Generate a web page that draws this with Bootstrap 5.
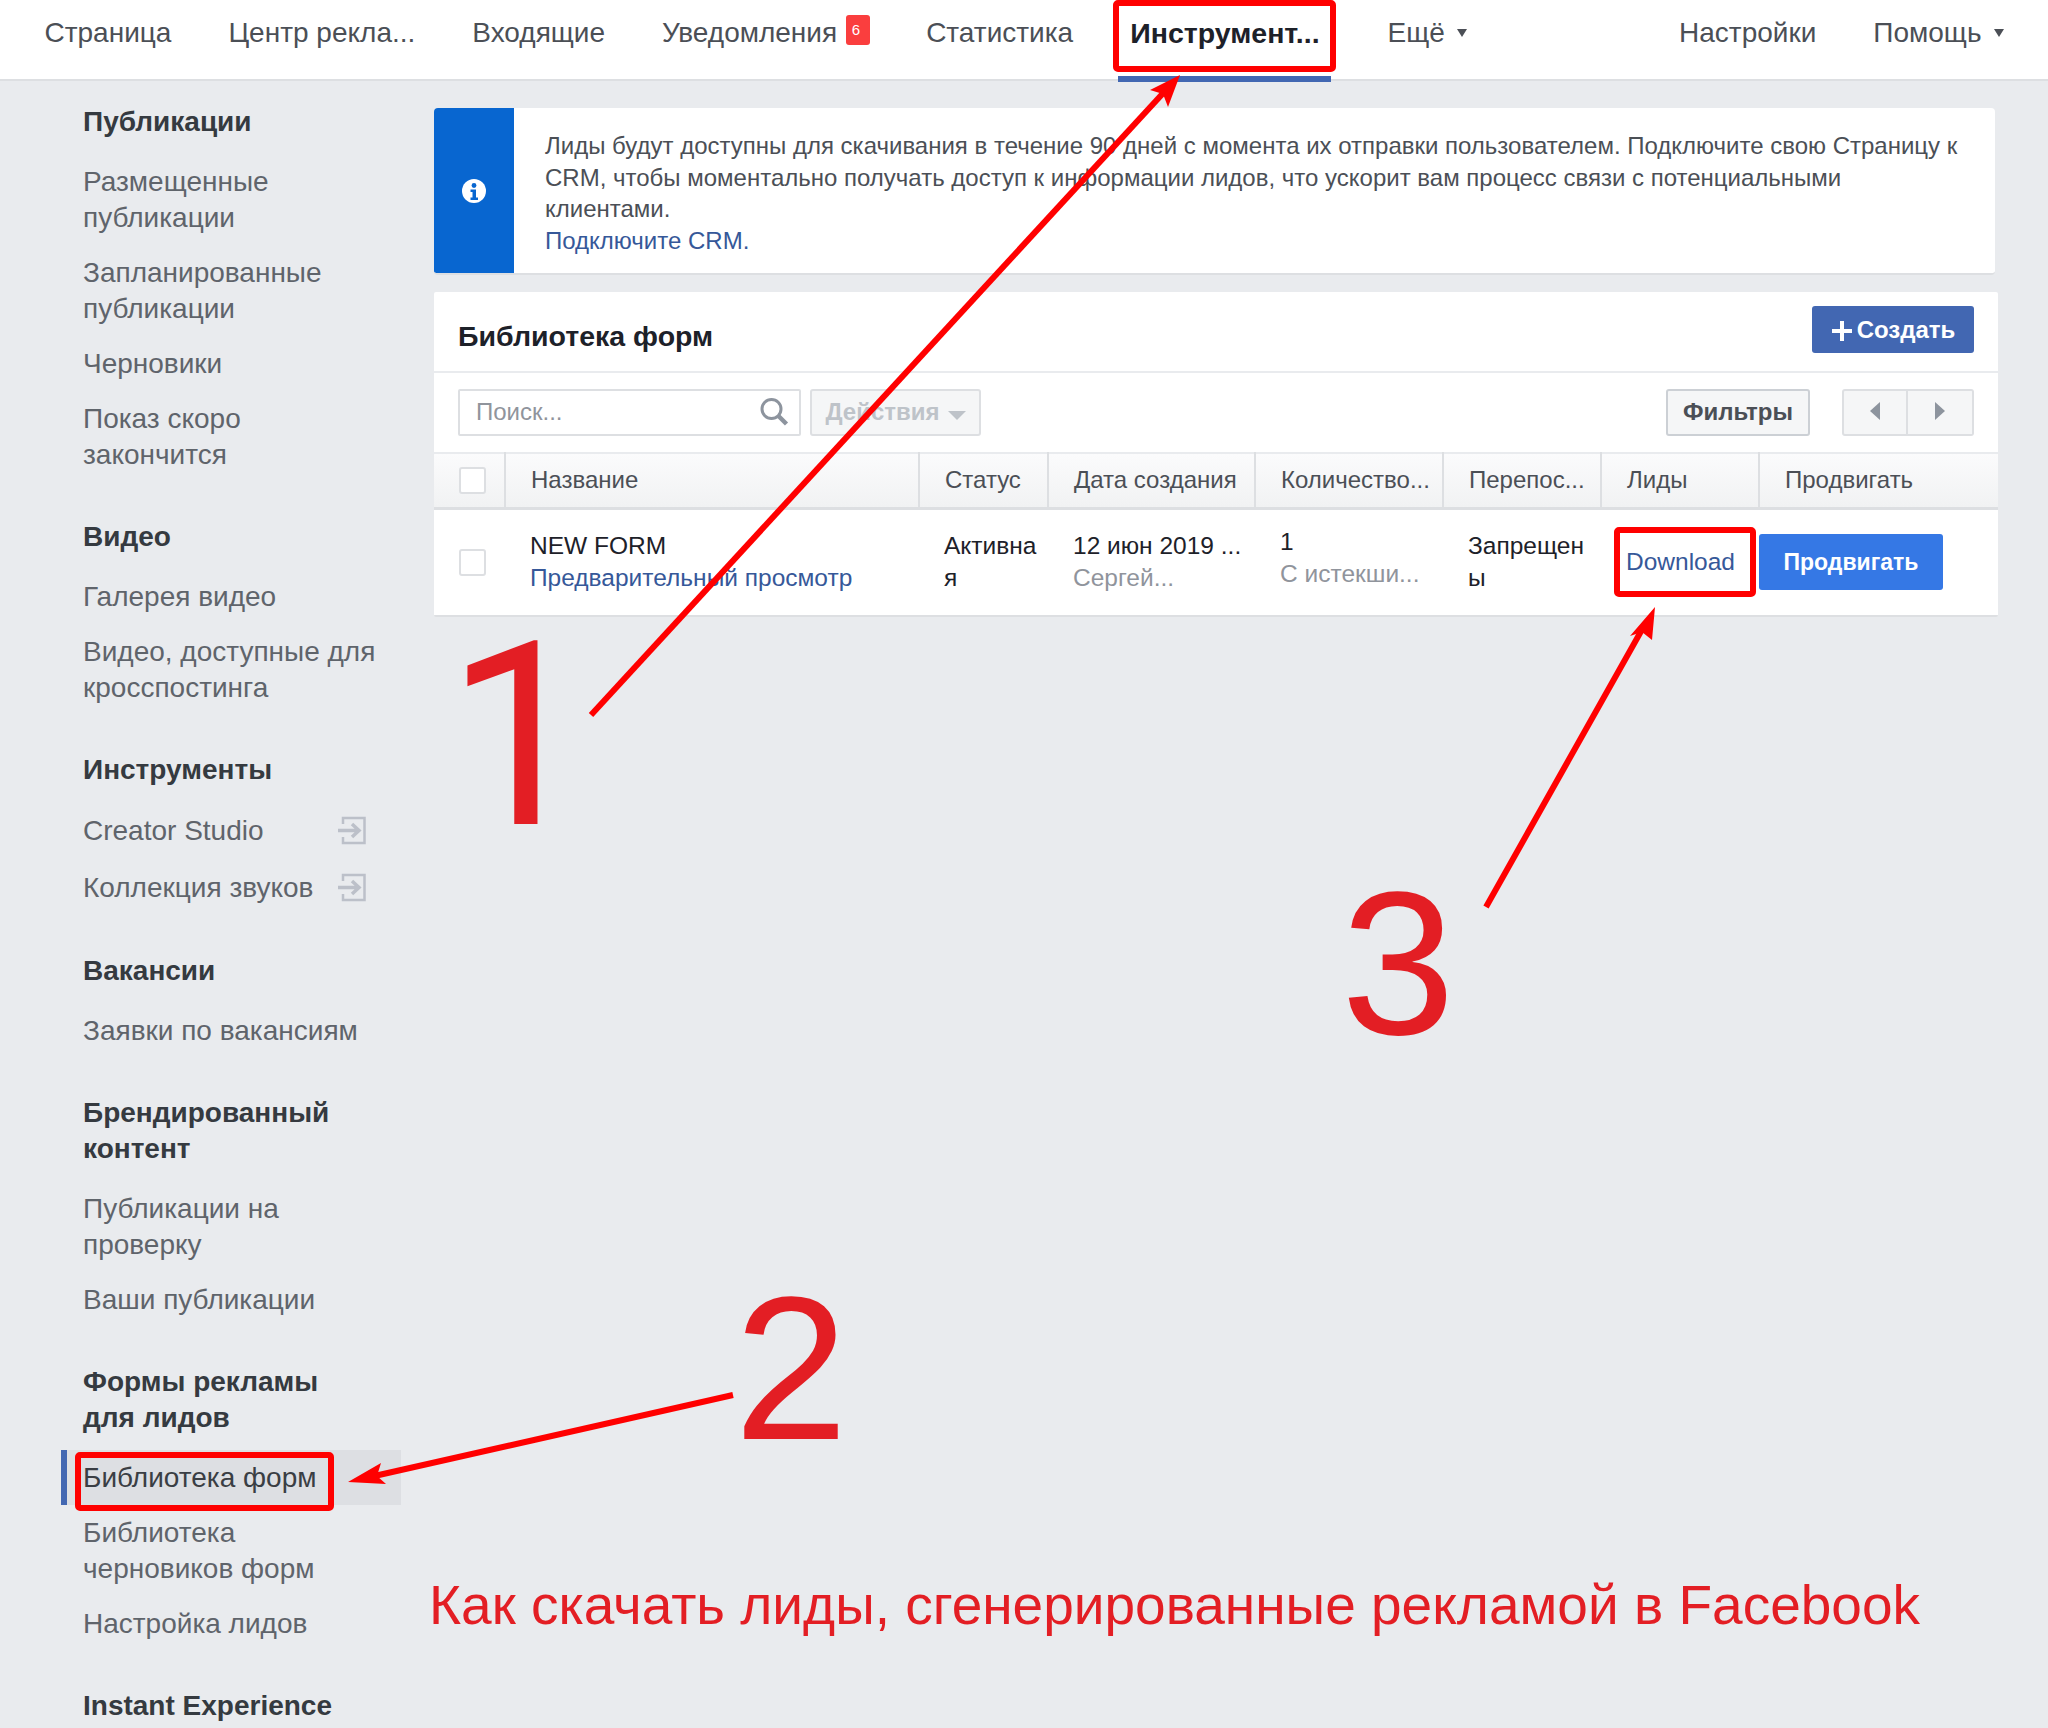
<!DOCTYPE html>
<html lang="ru">
<head>
  <meta charset="UTF-8" />
  <title>Библиотека форм</title>
  <link href="https://cdn.jsdelivr.net/npm/bootstrap@5.3.0/dist/css/bootstrap.min.css" rel="stylesheet" />
  <style>
    body {
      background: #e9ebee;
      color: #4b4f56;
      font-family: "Liberation Sans", Arial, sans-serif;
      font-size: 25px;
      width: 2048px;
      height: 1728px;
      overflow: hidden;
      position: relative;
    }
    /* top bar */
    .top-bar {
      height: 81px;
      background: #fff;
      border-bottom: 2px solid #dddfe2;
      padding: 0 16px;
      font-size: 28px;
    }
    .top-bar .nav-link {
      color: #4b4f56;
      padding: 16px 28.5px 0;
      height: 79px;
      line-height: 34px;
      position: relative;
    }
    .top-bar .nav-link.has-count { padding-right: 60.500px; }
    .top-bar .nav-link.is-current {
      color: #1d2129;
      font-weight: 700;
      font-size: 28.5px;
      margin-right: 11px;
    }
    .top-bar .nav-link.is-current::after {
      content: "";
      position: absolute;
      left: 16px;
      right: 17px;
      bottom: -3px;
      height: 6px;
      background: #4267b2;
    }
    .notif-count {
      background: #fa3e3e;
      color: #fff;
      font-size: 15px;
      font-weight: 400;
      padding: 4px 6px;
      border-radius: 3px;
      height: 30px;
      width: 24px;
      line-height: 22px;
      position: absolute;
      top: 15px;
      right: 28px;
    }
    .caret-dn {
      display: inline-block;
      border: 5px solid transparent;
      border-top: 8px solid #4b4f56;
      border-bottom: 0;
      margin-left: 12px;
      vertical-align: 5px;
    }
    /* sidebar */
    .side-col {
      width: 434px;
      flex: none;
      padding-top: 23px;
    }
    .side-group { margin-bottom: 37px; }
    .side-title {
      font-size: 28px;
      font-weight: 700;
      line-height: 36px;
      color: #353a40;
      padding: 0 70px 0 83px;
      margin-bottom: 14px;
    }
    .side-link {
      line-height: 36px;
      padding: 9.5px 20px 9.5px 83px;
      width: 401px;
      color: #5f646b;
      font-size: 28px;
    }
    .side-link.has-icon { padding: 10.5px 35px 10.5px 83px; }
    .side-link.is-current {
      background: #dddfe3;
      color: #3a3e44;
      margin-left: 61px;
      padding-left: 16px;
      width: 340px;
      border-left: 6px solid #4267b2;
    }
    .side-link svg { width: 28px; height: 29px; }
    /* content */
    .main-col {
      width: 1564px;
      padding-top: 27px;
    }
    .info-box {
      height: 167px;
      width: 1561px;
      background: #fff;
      border: 0;
      border-bottom: 2px solid #dddfe2;
      border-radius: 4px;
      overflow: hidden;
      margin-bottom: 17px;
      font-size: 24px;
      line-height: 31.5px;
    }
    .info-icon {
      width: 80px;
      flex: none;
      background: #0866d0;
    }
    .info-text { padding: 22px 30px 0 31px; }
    .fb-link { color: #365899; text-decoration: none; }
    .forms-card {
      height: 325px;
      border: 0;
      border-radius: 2px;
      border-bottom: 2px solid #dddfe2;
      background: #fff;
    }
    .forms-head {
      height: 81px;
      padding: 14px 24px 0;
      border-bottom: 2px solid #e9ebee;
    }
    .forms-title {
      color: #1d2129;
      font-size: 28.5px;
      font-weight: 700;
      margin: 14px 0 0;
      line-height: 32px;
    }
    .btn-create {
      width: 162px;
      height: 47px;
      background: #4267b2;
      color: #fff;
      font-size: 24px;
      font-weight: 700;
      padding: 0;
      border: 0;
      border-radius: 3px;
    }
    .forms-tools {
      height: 80px;
      padding: 16px 24px 0;
    }
    .search-box {
      width: 343px;
      height: 47px;
      border: 2px solid #dddfe2;
      border-radius: 2px;
      padding: 0 10px 0 14px;
    }
    .search-box input {
      border: 0;
      outline: 0;
      width: 270px;
      font-size: 24px;
      color: #4b4f56;
    }
    .search-box input::placeholder { color: #90949c; }
    .btn-soft {
      height: 47px;
      background: #f5f6f7;
      border: 2px solid #ccd0d5;
      border-radius: 3px;
      color: #4b4f56;
      font-size: 24px;
      font-weight: 700;
      padding: 0;
    }
    .btn-soft:disabled {
      color: #bec3c9;
      background: #f5f6f7;
      border-color: #dddfe2;
      opacity: 1;
    }
    .btn-actions { width: 171px; margin-left: 9px; }
    .btn-filter { width: 144px; margin-right: 32px; }
    .pager-btn { width: 66px; border-color: #dddfe2; }
    .pager-btn + .pager-btn { border-left: 0; }
    .tri-left, .tri-right, .tri-down {
      display: inline-block;
      border: 9px solid transparent;
    }
    .tri-left { border-left: 0; border-right: 10px solid #8d949e; }
    .tri-right { border-right: 0; border-left: 10px solid #8d949e; }
    .tri-down { border-bottom: 0; border-top: 9px solid #bec3c9; margin-left: 8px; }
    /* leads table */
    .forms-table {
      table-layout: fixed;
      width: 1564px;
      margin: 0;
      font-size: 24.5px;
      line-height: 32px;
    }
    .forms-table th {
      height: 55px;
      padding: 0 0 0 25px;
      font-size: 24px;
      font-weight: 400;
      color: #4b4f56;
      vertical-align: middle;
      background: linear-gradient(#fbfbfc, #f1f2f3);
      border-top: 2px solid #e9ebee;
      border-bottom: 3px solid #dddfe2;
      border-right: 2px solid #dddfe2;
      white-space: nowrap;
    }
    .forms-table th:last-child { border-right: 0; }
    .forms-table td {
      height: 107px;
      padding: 0 0 0 25px;
      border: 0;
      color: #1d2129;
      vertical-align: middle;
    }
    .forms-table .cell-tight { padding-left: 0; }
    .muted-line { color: #90949c; white-space: nowrap; }
    .tick-box {
      display: block;
      width: 27px;
      height: 27px;
      border: 2px solid #dddfe2;
      border-radius: 3px;
      background: #fff;
    }
    .btn-promote {
      width: 184px;
      height: 56px;
      background: #3578e5;
      color: #fff;
      font-size: 23px;
      font-weight: 700;
      border: 0;
      border-radius: 3px;
      padding: 0;
    }
    /* annotations lying over the page */
    .mark-layer {
      position: absolute;
      left: 0;
      top: 0;
      width: 2048px;
      height: 1728px;
      pointer-events: none;
    }
    .mark-text {
      position: absolute;
      color: #e31e24;
      line-height: 1;
      white-space: nowrap;
    }
    .mark-one { left: 446px; top: 608px; font-size: 257px; font-family: Roboto, sans-serif; }
    .mark-two { left: 734px; top: 1265px; font-size: 205px; }
    .mark-three { left: 1341px; top: 860px; font-size: 205px; }
    .mark-caption { left: 429px; top: 1578px; font-size: 55px; }
  </style>
</head>
<body>

  <nav class="top-bar d-flex">
    <a class="nav-link" href="#">Страница</a>
    <a class="nav-link" href="#">Центр рекла...</a>
    <a class="nav-link" href="#">Входящие</a>
    <a class="nav-link has-count" href="#">Уведомления<span class="notif-count">6</span></a>
    <a class="nav-link" href="#">Статистика</a>
    <a class="nav-link is-current" href="#">Инструмент...</a>
    <a class="nav-link" href="#">Ещё<span class="caret-dn"></span></a>
    <a class="nav-link ms-auto" href="#">Настройки</a>
    <a class="nav-link" href="#">Помощь<span class="caret-dn"></span></a>
  </nav>

  <div class="d-flex">
    <aside class="side-col">
      <div class="side-group">
        <div class="side-title">Публикации</div>
        <div class="side-link">Размещенные публикации</div>
        <div class="side-link">Запланированные публикации</div>
        <div class="side-link">Черновики</div>
        <div class="side-link">Показ скоро закончится</div>
      </div>
      <div class="side-group">
        <div class="side-title">Видео</div>
        <div class="side-link">Галерея видео</div>
        <div class="side-link">Видео, доступные для кросспостинга</div>
      </div>
      <div class="side-group">
        <div class="side-title">Инструменты</div>
        <div class="side-link has-icon d-flex justify-content-between align-items-center">Creator Studio
          <svg viewBox="0 0 28 29" fill="none" stroke="#bcc0c9" stroke-width="2.5"><path d="M5 8V2h21.500v25H5v-6"/><path d="M0 14.500h20M14 8l7 6.500-7 6.500" stroke-width="3.500"/></svg>
        </div>
        <div class="side-link has-icon d-flex justify-content-between align-items-center">Коллекция звуков
          <svg viewBox="0 0 28 29" fill="none" stroke="#bcc0c9" stroke-width="2.5"><path d="M5 8V2h21.500v25H5v-6"/><path d="M0 14.500h20M14 8l7 6.500-7 6.500" stroke-width="3.500"/></svg>
        </div>
      </div>
      <div class="side-group">
        <div class="side-title">Вакансии</div>
        <div class="side-link">Заявки по вакансиям</div>
      </div>
      <div class="side-group">
        <div class="side-title">Брендированный контент</div>
        <div class="side-link">Публикации на проверку</div>
        <div class="side-link">Ваши публикации</div>
      </div>
      <div class="side-group">
        <div class="side-title">Формы рекламы для лидов</div>
        <div class="side-link is-current">Библиотека форм</div>
        <div class="side-link">Библиотека черновиков форм</div>
        <div class="side-link">Настройка лидов</div>
      </div>
      <div class="side-group">
        <div class="side-title">Instant Experience</div>
      </div>
    </aside>

    <main class="main-col">
      <div class="info-box d-flex">
        <div class="info-icon d-flex align-items-center justify-content-center">
          <svg width="24" height="24" viewBox="0 0 24 24"><circle cx="12" cy="12" r="12" fill="#fff"/><circle cx="12" cy="6.500" r="2.400" fill="#0866d0"/><path d="M8.500 10.500h5.500v8h2v2.500H8.500v-2.500h2v-5.500h-2z" fill="#0866d0"/></svg>
        </div>
        <div class="info-text">
          Лиды будут доступны для скачивания в течение 90 дней с момента их отправки пользователем. Подключите свою Страницу к CRM, чтобы моментально получать доступ к информации лидов, что ускорит вам процесс связи с потенциальными клиентами.<br />
          <a class="fb-link" href="#">Подключите CRM.</a>
        </div>
      </div>

      <div class="card forms-card">
        <div class="forms-head d-flex justify-content-between">
          <h2 class="forms-title">Библиотека форм</h2>
          <button class="btn btn-create" type="button">
            <svg width="22" height="22" viewBox="0 0 22 22" class="me-1"><path d="M9 1h4v8h8v4h-8v8H9v-8H1V9h8z" fill="#fff"/></svg>Создать
          </button>
        </div>
        <div class="forms-tools d-flex">
          <div class="search-box d-flex align-items-center justify-content-between">
            <input type="text" placeholder="Поиск..." />
            <svg width="30" height="30" viewBox="0 0 30 30" fill="none" stroke="#8d949e"><circle cx="12.500" cy="12" r="9.500" stroke-width="3"/><path d="M19.500 19l8 8" stroke-width="4.500"/></svg>
          </div>
          <button class="btn btn-soft btn-actions" type="button" disabled>Действия<span class="tri-down"></span></button>
          <button class="btn btn-soft btn-filter ms-auto" type="button">Фильтры</button>
          <div class="d-flex">
            <button class="btn btn-soft pager-btn rounded-end-0" type="button"><span class="tri-left"></span></button>
            <button class="btn btn-soft pager-btn rounded-start-0" type="button"><span class="tri-right"></span></button>
          </div>
        </div>
        <table class="table forms-table">
          <colgroup>
            <col style="width:71px" /><col style="width:414px" /><col style="width:129px" /><col style="width:207px" />
            <col style="width:188px" /><col style="width:158px" /><col style="width:158px" /><col style="width:239px" />
          </colgroup>
          <thead>
            <tr>
              <th><span class="tick-box"></span></th>
              <th>Название</th>
              <th>Статус</th>
              <th>Дата создания</th>
              <th>Количество...</th>
              <th>Перепос...</th>
              <th>Лиды</th>
              <th>Продвигать</th>
            </tr>
          </thead>
          <tbody>
            <tr>
              <td><span class="tick-box"></span></td>
              <td>NEW FORM<br /><a class="fb-link" href="#">Предварительный просмотр</a></td>
              <td>Активна<br />я</td>
              <td>12 июн 2019 ...<div class="muted-line">Сергей...</div></td>
              <td class="pb-2">1<div class="muted-line">С истекши...</div></td>
              <td>Запрещен<br />ы</td>
              <td><a class="fb-link" href="#">Download</a></td>
              <td class="cell-tight"><button class="btn btn-promote" type="button">Продвигать</button></td>
            </tr>
          </tbody>
        </table>
      </div>
    </main>
  </div>

  <svg class="mark-layer" viewBox="0 0 2048 1728" fill="none">
    <g stroke="#f00" stroke-width="6">
      <rect x="1116" y="3" width="217" height="66" rx="2"/>
      <rect x="1617" y="530" width="136" height="64" rx="2"/>
      <rect x="78" y="1455" width="253" height="53" rx="2"/>
      <path d="M591 715 1166 90"/>
      <path d="M733 1395 370 1477"/>
      <path d="M1486 907 1644 626"/>
    </g>
    <g fill="#f00">
      <path d="M1180 75 1168 107 1163 94 1150 90z"/>
      <path d="M348 1482 381 1463 377 1476 386 1484z"/>
      <path d="M1655 607 1652 640 1642 632 1630 636z"/>
    </g>
  </svg>
  <div class="mark-text mark-one">1</div>
  <div class="mark-text mark-two">2</div>
  <div class="mark-text mark-three">3</div>
  <div class="mark-text mark-caption">Как скачать лиды, сгенерированные рекламой в Facebook</div>

  <script src="https://cdn.jsdelivr.net/npm/bootstrap@5.3.0/dist/js/bootstrap.bundle.min.js"></script>
</body>
</html>
